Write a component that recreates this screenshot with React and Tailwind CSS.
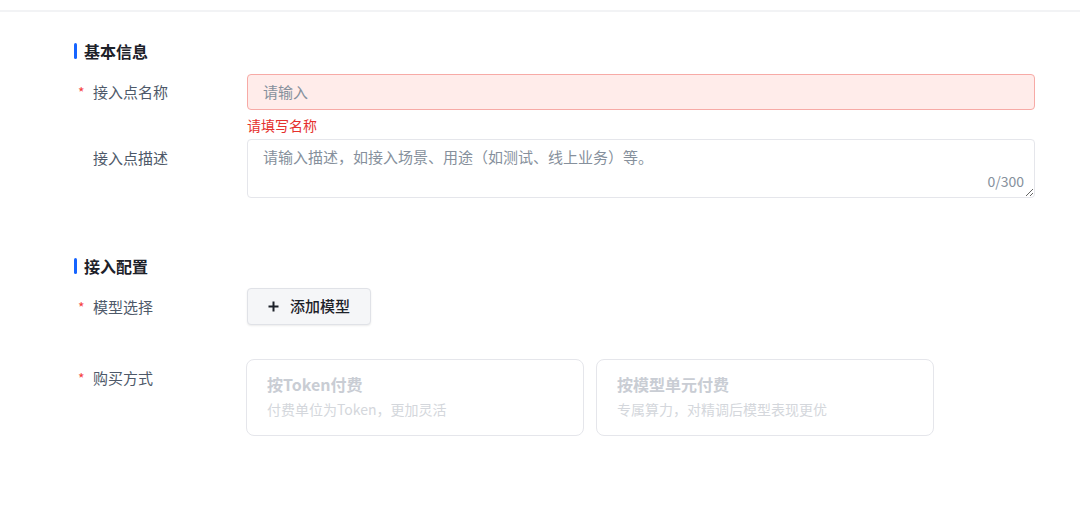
import { useState } from 'react';

const font = { fontFamily: '"Noto Sans CJK SC", "Noto Sans", sans-serif' };

function SectionTitle({ children }) {
    return (
        <div className="flex items-center h-5">
            <span className="w-[3px] h-4 rounded-full bg-[#1664ff]" />
            <span className="ml-[7px] text-[16px] leading-5 font-semibold text-[#1d2129]">{children}</span>
        </div>
    );
}

function Label({ required, children, className = '' }) {
    return (
        <div className={`w-[173px] shrink-0 flex items-center text-[15px] leading-5 text-[#4e5969] ${className}`}>
            <span className="w-[19px] text-[14px] text-[#f53f3f] pl-[4px]">{required ? '*' : ''}</span>
            <span>{children}</span>
        </div>
    );
}

function PayCard({ title, desc }) {
    return (
        <div className="w-[338px] h-[77px] rounded-lg border border-[#e5e6eb] px-5 pt-[12px] cursor-not-allowed">
            <div className="text-[16px] leading-6 font-semibold text-[#c9cdd4]">{title}</div>
            <div className="mt-[3px] text-[14px] leading-5 text-[#d4d7dc]">{desc}</div>
        </div>
    );
}

export default function App() {
    const [name, setName] = useState('');
    const [desc, setDesc] = useState('');

    return (
        <div className="w-[1080px] h-[506px] bg-white overflow-hidden" style={font}>
            <div className="h-[10px]" />
            <div className="h-[2px] bg-[#f2f3f5]" />

            <div className="pl-[74px]">
                {/* 基本信息 */}
                <div className="mt-[29px]">
                    <SectionTitle>基本信息</SectionTitle>
                </div>

                <div className="flex mt-[13px]">
                    <Label required className="h-9">接入点名称</Label>
                    <div className="w-[788px]">
                        <input
                            value={name}
                            onChange={(e) => setName(e.target.value)}
                            placeholder="请输入"
                            className="w-full h-9 px-[15px] pb-[2px] rounded border border-[#f7aaa6] bg-[#ffecea] text-[15px] text-[#1d2129] placeholder:text-[#86909c] outline-none"
                        />
                        <div className="mt-[5px] text-[14px] leading-5 text-[#e5302d]">请填写名称</div>
                    </div>
                </div>

                <div className="flex mt-[4px]">
                    <Label className="pt-[9px] self-start">接入点描述</Label>
                    <div className="w-[788px] relative">
                        <textarea
                            value={desc}
                            onChange={(e) => setDesc(e.target.value)}
                            maxLength={300}
                            placeholder="请输入描述，如接入场景、用途（如测试、线上业务）等。"
                            className="block w-full h-[59px] px-[15px] pt-[7px] rounded border border-[#e5e6eb] bg-white text-[15px] leading-5 text-[#1d2129] placeholder:text-[#86909c] outline-none resize-y"
                        />
                        <span className="absolute right-[11px] bottom-[7px] text-[14px] leading-5 text-[#86909c]">
                            {desc.length}/300
                        </span>
                    </div>
                </div>

                {/* 接入配置 */}
                <div className="mt-[58px]">
                    <SectionTitle>接入配置</SectionTitle>
                </div>

                <div className="flex mt-[12px]">
                    <Label required className="h-[37px]">模型选择</Label>
                    <button className="w-[124px] h-[37px] flex items-center justify-center gap-[11px] rounded border border-[#e0e2e7] bg-[#f5f6f8] shadow-[0_1px_2px_rgba(0,0,0,0.08)] text-[15px] font-medium text-[#1d2129]">
                        <svg width="11" height="11" viewBox="0 0 11 11">
                            <path d="M5.5 0.5v10M0.5 5.5h10" stroke="#1d2129" strokeWidth="2" />
                        </svg>
                        <span>添加模型</span>
                    </button>
                </div>

                <div className="flex mt-[34px]">
                    <Label required className="pt-[9px] self-start">购买方式</Label>
                    <div className="flex gap-3 -ml-px">
                        <PayCard title="按Token付费" desc="付费单位为Token，更加灵活" />
                        <PayCard title="按模型单元付费" desc="专属算力，对精调后模型表现更优" />
                    </div>
                </div>
            </div>
        </div>
    );
}
